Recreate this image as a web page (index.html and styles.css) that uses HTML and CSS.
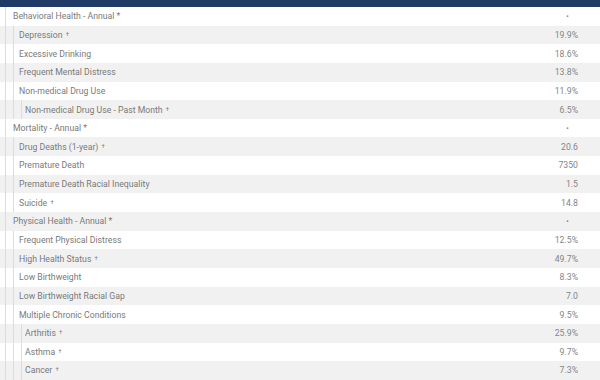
FILE: index.html
```html
<!DOCTYPE html>
<html>
<head>
<meta charset="utf-8">
<link rel="stylesheet" href="styles.css">
</head>
<body>
<div class="topbar"></div>
<div class="list">
  <div class="row d0"><span class="g"></span><span class="label">Behavioral Health - Annual *</span><span class="val dot">·</span></div>
  <div class="row d1"><span class="g"></span><span class="g"></span><span class="label">Depression <span class="sup">†</span></span><span class="val">19.9%</span></div>
  <div class="row d1"><span class="g"></span><span class="g"></span><span class="label">Excessive Drinking</span><span class="val">18.6%</span></div>
  <div class="row d1"><span class="g"></span><span class="g"></span><span class="label">Frequent Mental Distress</span><span class="val">13.8%</span></div>
  <div class="row d1"><span class="g"></span><span class="g"></span><span class="label">Non-medical Drug Use</span><span class="val">11.9%</span></div>
  <div class="row d2"><span class="g"></span><span class="g"></span><span class="g"></span><span class="label">Non-medical Drug Use - Past Month <span class="sup">†</span></span><span class="val">6.5%</span></div>
  <div class="row d0"><span class="g"></span><span class="label">Mortality - Annual *</span><span class="val dot">·</span></div>
  <div class="row d1"><span class="g"></span><span class="g"></span><span class="label">Drug Deaths (1-year) <span class="sup">†</span></span><span class="val">20.6</span></div>
  <div class="row d1"><span class="g"></span><span class="g"></span><span class="label">Premature Death</span><span class="val">7350</span></div>
  <div class="row d1"><span class="g"></span><span class="g"></span><span class="label">Premature Death Racial Inequality</span><span class="val">1.5</span></div>
  <div class="row d1"><span class="g"></span><span class="g"></span><span class="label">Suicide <span class="sup">†</span></span><span class="val">14.8</span></div>
  <div class="row d0"><span class="g"></span><span class="label">Physical Health - Annual *</span><span class="val dot">·</span></div>
  <div class="row d1"><span class="g"></span><span class="g"></span><span class="label">Frequent Physical Distress</span><span class="val">12.5%</span></div>
  <div class="row d1"><span class="g"></span><span class="g"></span><span class="label">High Health Status <span class="sup">†</span></span><span class="val">49.7%</span></div>
  <div class="row d1"><span class="g"></span><span class="g"></span><span class="label">Low Birthweight</span><span class="val">8.3%</span></div>
  <div class="row d1"><span class="g"></span><span class="g"></span><span class="label">Low Birthweight Racial Gap</span><span class="val">7.0</span></div>
  <div class="row d1"><span class="g"></span><span class="g"></span><span class="label">Multiple Chronic Conditions</span><span class="val">9.5%</span></div>
  <div class="row d2"><span class="g"></span><span class="g"></span><span class="g"></span><span class="label">Arthritis <span class="sup">†</span></span><span class="val">25.9%</span></div>
  <div class="row d2"><span class="g"></span><span class="g"></span><span class="g"></span><span class="label">Asthma <span class="sup">†</span></span><span class="val">9.7%</span></div>
  <div class="row d2"><span class="g"></span><span class="g"></span><span class="g"></span><span class="label">Cancer <span class="sup">†</span></span><span class="val">7.3%</span></div>
</div>
</body>
</html>
```
FILE: styles.css
```css
html, body {
  margin: 0;
  padding: 0;
  background: #ffffff;
  overflow: hidden;
}
body {
  width: 600px;
  height: 380px;
  font-family: Roboto, "Liberation Sans", sans-serif;
  font-size: 8.7px;
  color: #7a7a7a;
}
.topbar {
  height: 7px;
  background: #1f3b66;
}
.list {
  display: flex;
  flex-direction: column;
}
.row {
  display: flex;
  align-items: stretch;
  height: 18.65px;
  padding-left: 5px;
  background: #ffffff;
}
.row:nth-child(even) {
  background: #f1f1f1;
}
.g {
  width: 7px;
  flex: none;
  border-left: 1px solid #dcdcdc;
}
.label {
  flex: 1;
  display: flex;
  align-items: center;
  white-space: pre;
}
.d1 .label { margin-left: -2px; }
.d2 .label { margin-left: -4px; }
.sup {
  font-size: 6px;
  position: relative;
  top: -1.5px;
  margin-left: 1px;
}
.val {
  display: flex;
  align-items: center;
  justify-content: flex-end;
  padding-right: 22px;
  color: #858585;
}
.val.dot {
  padding-right: 31px;
  font-size: 10px;
  font-weight: bold;
}
```
